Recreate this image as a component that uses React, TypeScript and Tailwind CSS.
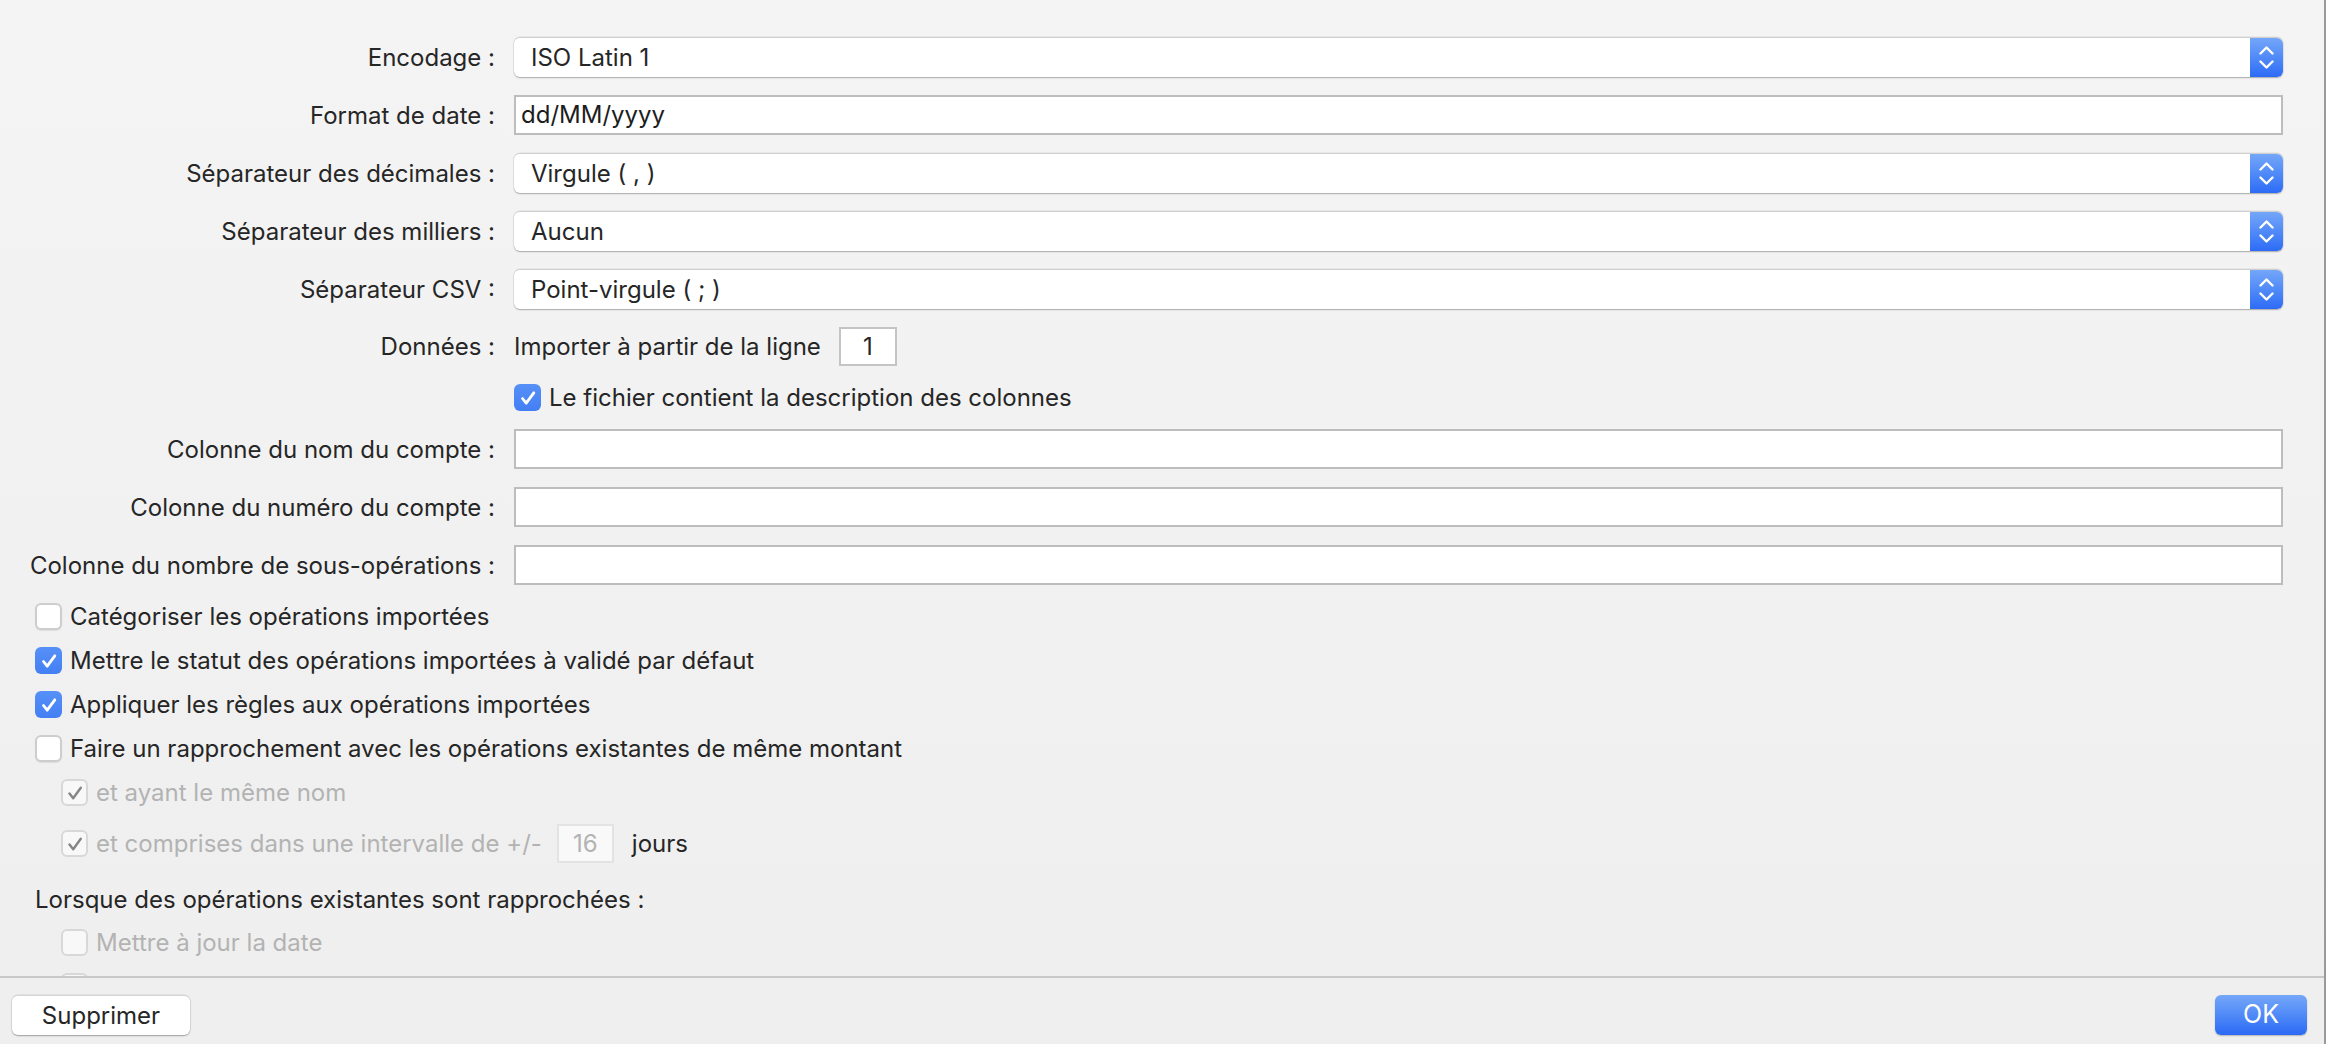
import type { ReactNode } from 'react';

const font = { fontFamily: 'Inter, "Liberation Sans", Arial, sans-serif' };

const Stepper = () => (
  <div className="flex h-full w-[33px] shrink-0 flex-col items-center justify-center gap-[5px] rounded-r-[6px] bg-gradient-to-b from-[#74a6f8] to-[#2d6bf6]">
    <svg width="15" height="9" viewBox="0 0 15 9" fill="none">
      <path d="M1.5 7.5 L7.5 1.5 L13.5 7.5" stroke="white" strokeWidth="2.4" strokeLinecap="round" strokeLinejoin="round" />
    </svg>
    <svg width="15" height="9" viewBox="0 0 15 9" fill="none">
      <path d="M1.5 1.5 L7.5 7.5 L13.5 1.5" stroke="white" strokeWidth="2.4" strokeLinecap="round" strokeLinejoin="round" />
    </svg>
  </div>
);

const Popup = ({ value }: { value: string }) => (
  <div className="flex h-[40px] flex-1 items-stretch rounded-[6px] border-t border-t-[#cfcfcf] bg-white shadow-[0_1px_1.5px_rgba(0,0,0,0.28),0_0_0_0.5px_rgba(0,0,0,0.08)]">
    <div className="flex flex-1 items-center pl-[17px] text-[24px] text-[#262626]">{value}</div>
    <Stepper />
  </div>
);

const Field = ({ value = '' }: { value?: string }) => (
  <div className="flex h-[40px] flex-1 items-center border-2 border-[#bdbdbd] bg-white pl-[5px] text-[24px] text-[#1d1d1d]">
    {value}
  </div>
);

const Row = ({ label, children }: { label: string; children: ReactNode }) => (
  <div className="flex items-center gap-[19px]">
    <div className="flex w-[460px] shrink-0 justify-end whitespace-nowrap text-[24px] leading-[27px] text-[#262626]">
      <span>{label}</span>
    </div>
    {children}
  </div>
);

const Tick = ({ color, width }: { color: string; width: number }) => (
  <svg width="16" height="16" viewBox="0 0 16 16" fill="none">
    <path d="M2.5 8.5 L6.2 13.2 L13.8 2.8" stroke={color} strokeWidth={width} strokeLinecap="round" strokeLinejoin="round" />
  </svg>
);

const Check = ({ checked = false, disabled = false }: { checked?: boolean; disabled?: boolean }) => {
  if (disabled) {
    return (
      <div className="flex h-[27px] w-[27px] shrink-0 items-center justify-center rounded-[6px] border-2 border-[#d8d8d8] bg-[#f8f8f8]">
        {checked && <Tick color="#858585" width={2.4} />}
      </div>
    );
  }
  if (checked) {
    return (
      <div className="flex h-[27px] w-[27px] shrink-0 items-center justify-center rounded-[6px] bg-gradient-to-b from-[#5690f7] to-[#437ff4]">
        <Tick color="white" width={2.8} />
      </div>
    );
  }
  return <div className="h-[27px] w-[27px] shrink-0 rounded-[6px] border-2 border-[#cdcdcd] bg-white shadow-[0_1px_1px_rgba(0,0,0,0.08)]" />;
};

const Option = ({
  label,
  checked,
  disabled,
  children,
}: {
  label?: string;
  checked?: boolean;
  disabled?: boolean;
  children?: ReactNode;
}) => (
  <div className="flex h-[27px] items-center gap-[8px]">
    <Check checked={checked} disabled={disabled} />
    {label && (
      <span className={`whitespace-nowrap text-[24px] leading-[27px] ${disabled ? 'text-[#b3b3b3]' : 'text-[#262626]'}`}>
        {label}
      </span>
    )}
    {children}
  </div>
);

export default function App() {
  return (
    <div className="flex h-[1044px] w-full overflow-hidden bg-[#5a5a5a]" style={font}>
      <div className="flex w-[2324px] flex-col bg-[#f1f1f1]">
        <div className="flex h-[976px] flex-col overflow-hidden bg-gradient-to-b from-[#f4f4f4] to-[#efefef] pl-[35px] pr-[41px] pt-[37px]">
          <div className="flex flex-col gap-[18px]">
            <Row label="Encodage :">
              <Popup value="ISO Latin 1" />
            </Row>
            <Row label="Format de date :">
              <Field value="dd/MM/yyyy" />
            </Row>
            <Row label="Séparateur des décimales :">
              <Popup value="Virgule ( , )" />
            </Row>
            <Row label="Séparateur des milliers :">
              <Popup value="Aucun" />
            </Row>
            <Row label="Séparateur CSV :">
              <Popup value="Point-virgule ( ; )" />
            </Row>
            <Row label="Données :">
              <div className="flex h-[39px] items-center gap-[18px] text-[24px] text-[#262626]">
                <span>Importer à partir de la ligne</span>
                <div className="flex h-[39px] w-[58px] items-center justify-center border-2 border-[#c4c4c4] bg-white">1</div>
              </div>
            </Row>
            <div className="flex h-[27px] items-center pl-[479px]">
              <Option label="Le fichier contient la description des colonnes" checked />
            </div>
            <Row label="Colonne du nom du compte :">
              <Field />
            </Row>
            <Row label="Colonne du numéro du compte :">
              <Field />
            </Row>
            <Row label="Colonne du nombre de sous-opérations :">
              <Field />
            </Row>
          </div>

          <div className="mt-[18px] flex flex-col gap-[17px]">
            <Option label="Catégoriser les opérations importées" />
            <Option label="Mettre le statut des opérations importées à validé par défaut" checked />
            <Option label="Appliquer les règles aux opérations importées" checked />
            <Option label="Faire un rapprochement avec les opérations existantes de même montant" />
          </div>

          <div className="mt-[17px] flex flex-col pl-[26px]">
            <Option label="et ayant le même nom" checked disabled />
            <div className="mt-[18px] flex h-[39px] items-center">
              <Option label="et comprises dans une intervalle de +/-" checked disabled>
                <div className="ml-[7px] flex h-[39px] w-[57px] items-center justify-center border-2 border-[#e3e3e3] bg-[#f9f9f9] text-[24px] text-[#b3b3b3]">
                  16
                </div>
                <span className="ml-[10px] text-[24px] text-[#262626]">jours</span>
              </Option>
            </div>
          </div>

          <div className="mt-[23px] flex h-[27px] items-center whitespace-nowrap text-[24px] text-[#262626]">
            Lorsque des opérations existantes sont rapprochées :
          </div>

          <div className="mt-[16px] flex flex-col gap-[17px] pl-[26px]">
            <Option label="Mettre à jour la date" disabled />
            <Option disabled />
          </div>
        </div>

        <div className="h-[2px] bg-[#c8c8c8]" />

        <div className="flex flex-1 items-start justify-between bg-[#efefef] pl-[12px] pr-[17px] pt-[17px]">
          <button className="flex h-[40px] w-[178px] items-center justify-center rounded-[6px] border-t border-t-[#d6d6d6] bg-white text-[24px] text-[#262626] shadow-[0_1px_1.5px_rgba(0,0,0,0.3),0_0_0_0.5px_rgba(0,0,0,0.1)]">
            Supprimer
          </button>
          <button className="flex h-[40px] w-[92px] items-center justify-center rounded-[6px] bg-gradient-to-b from-[#75a7f8] to-[#2b69f5] text-[25px] text-white shadow-[0_1px_1.5px_rgba(0,0,0,0.25)]">
            OK
          </button>
        </div>
      </div>
      <div className="w-[2px] bg-[#9a9a9a]" />
    </div>
  );
}
